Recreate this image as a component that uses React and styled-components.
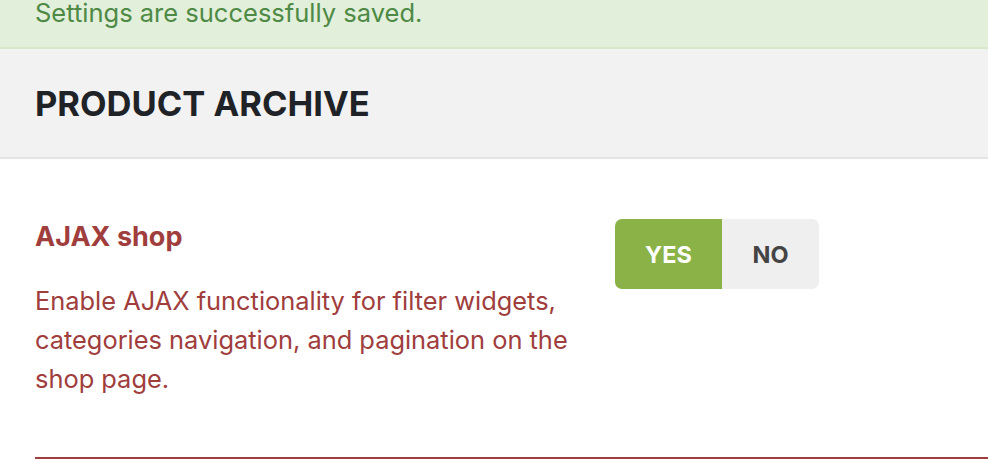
import React from "react";
import styled, { createGlobalStyle } from "styled-components";

const GlobalStyle = createGlobalStyle`
  body {
    margin: 0;
    background: #fff;
    font-family: Inter, "Noto Sans", sans-serif;
  }
`;

const Notice = styled.div`
  height: 47px;
  background: #e2efda;
  border-bottom: 2px solid #d5e8ca;
  color: #4e8a45;
  font-size: 25.5px;
  line-height: 26px;
  padding: 0 35px;
`;

const Header = styled.div`
  height: 108px;
  background: #f2f2f2;
  border-bottom: 2px solid #e5e5e5;
  display: flex;
  align-items: center;
  padding: 0 35px;
`;

const Heading = styled.h2`
  margin: 0;
  font-size: 34.5px;
  font-weight: 700;
  color: #1f2327;
`;

const Section = styled.div`
  padding: 60px 0 0 35px;
`;

const Row = styled.div`
  display: flex;
  align-items: flex-start;
  gap: 25px;
  padding-bottom: 59px;
  border-bottom: 2px solid #a03d3d;
`;

const Info = styled.div`
  width: 555px;
  color: #a03d3d;
`;

const Label = styled.h3`
  margin: 0;
  font-size: 27px;
  font-weight: 700;
  line-height: 36px;
`;

const Desc = styled.p`
  margin: 26px 0 0;
  font-size: 25.4px;
  line-height: 39px;
`;

const Toggle = styled.div`
  display: flex;
  height: 70px;
  border-radius: 7px;
  overflow: hidden;
`;

const Option = styled.button`
  border: none;
  width: ${(p) => p.$w}px;
  background: ${(p) => (p.$active ? "#8ab247" : "#efefef")};
  color: ${(p) => (p.$active ? "#fff" : "#444")};
  font-family: Inter, "Noto Sans", sans-serif;
  font-size: 23.5px;
  font-weight: 700;
  padding: 0;
  cursor: pointer;
`;

export default function App() {
  return (
    <>
      <GlobalStyle />
      <Notice>Settings are successfully saved.</Notice>
      <Header>
        <Heading>PRODUCT ARCHIVE</Heading>
      </Header>
      <Section>
        <Row>
          <Info>
            <Label>AJAX shop</Label>
            <Desc>
              Enable AJAX functionality for filter widgets, categories
              navigation, and pagination on the shop page.
            </Desc>
          </Info>
          <Toggle>
            <Option $active $w={107}>YES</Option>
            <Option $w={97}>NO</Option>
          </Toggle>
        </Row>
      </Section>
    </>
  );
}
